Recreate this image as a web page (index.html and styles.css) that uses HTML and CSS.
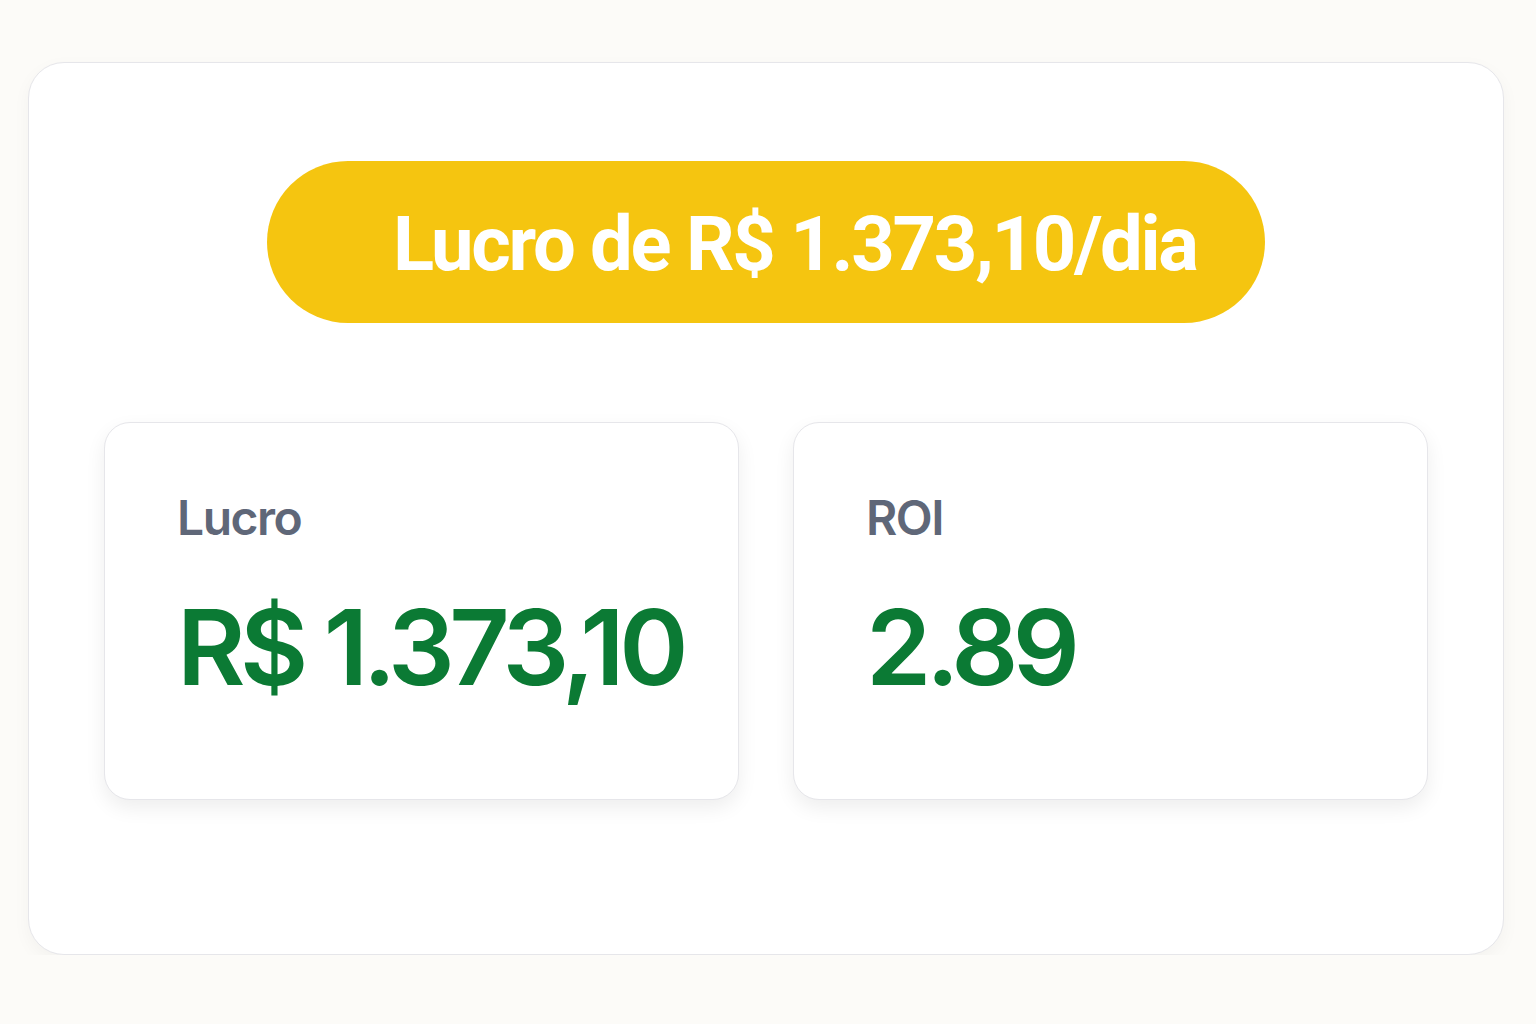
FILE: index.html
```html
<!DOCTYPE html>
<html lang="pt-BR">
<head>
    <link rel="stylesheet" href="styles.css">
    <meta charset="UTF-8">
    <meta name="viewport" content="width=device-width, initial-scale=1.0">
    <title>Resultado - Lucro</title>
</head>
<body>

    <!-- Result panel -->
    <section class="result-panel">
        <div class="profit-pill">
            <span>Lucro de R$ 1.373,10/dia</span>
        </div>

        <!-- Stat cards -->
        <div class="stats">
            <div class="stat-card">
                <p class="stat-label">Lucro</p>
                <p class="stat-value">R$ 1.373,10</p>
            </div>
            <div class="stat-card">
                <p class="stat-label">ROI</p>
                <p class="stat-value">2.89</p>
            </div>
        </div>
    </section>

</body>
</html>
```

FILE: styles.css
```css
body {
    background-color: #fcfbf8;
    font-family: 'Inter', 'Roboto', sans-serif;
    margin: 0;
    padding: 62px 32px 0 28px;
}
/* Outer panel */
.result-panel {
    background-color: #fff;
    border: 1px solid #e6e6ea;
    border-radius: 36px;
    box-shadow: 0 6px 18px rgba(0, 0, 0, 0.04);
    padding: 98px 75px 154px 75px;
    box-sizing: border-box;
    width: 1476px;
}
.profit-pill {
    background-color: #f5c510;
    border-radius: 81px;
    height: 162px;
    width: 998px;
    margin: 0 auto;
    display: flex;
    align-items: center;
    box-sizing: border-box;
    padding: 4px 0 0 126px;
}
.profit-pill span {
    color: #fff;
    font-family: 'Roboto', sans-serif;
    font-weight: 700;
    font-size: 76px;
    letter-spacing: -2.3px;
    white-space: nowrap;
}
/* Stat cards */
.stats {
    display: grid;
    grid-template-columns: minmax(0, 1fr) minmax(0, 1fr);
    gap: 54px;
    margin-top: 99px;
}
.stat-card {
    background-color: #fff;
    border: 1px solid #e6e6ea;
    border-radius: 26px;
    box-shadow: 0 8px 20px rgba(0, 0, 0, 0.07);
    padding: 65px 40px 0 72px;
    height: 378px;
    box-sizing: border-box;
}
.stat-label {
    margin: 0;
    color: #5f6778;
    font-size: 48px;
    font-weight: 600;
    line-height: 60px;
    letter-spacing: -1.5px;
}
.stat-value {
    margin: 36px 0 0 0;
    color: #0b7a34;
    font-size: 105px;
    font-weight: 600;
    line-height: 126px;
    letter-spacing: -5.5px;
    white-space: nowrap;
}
```
